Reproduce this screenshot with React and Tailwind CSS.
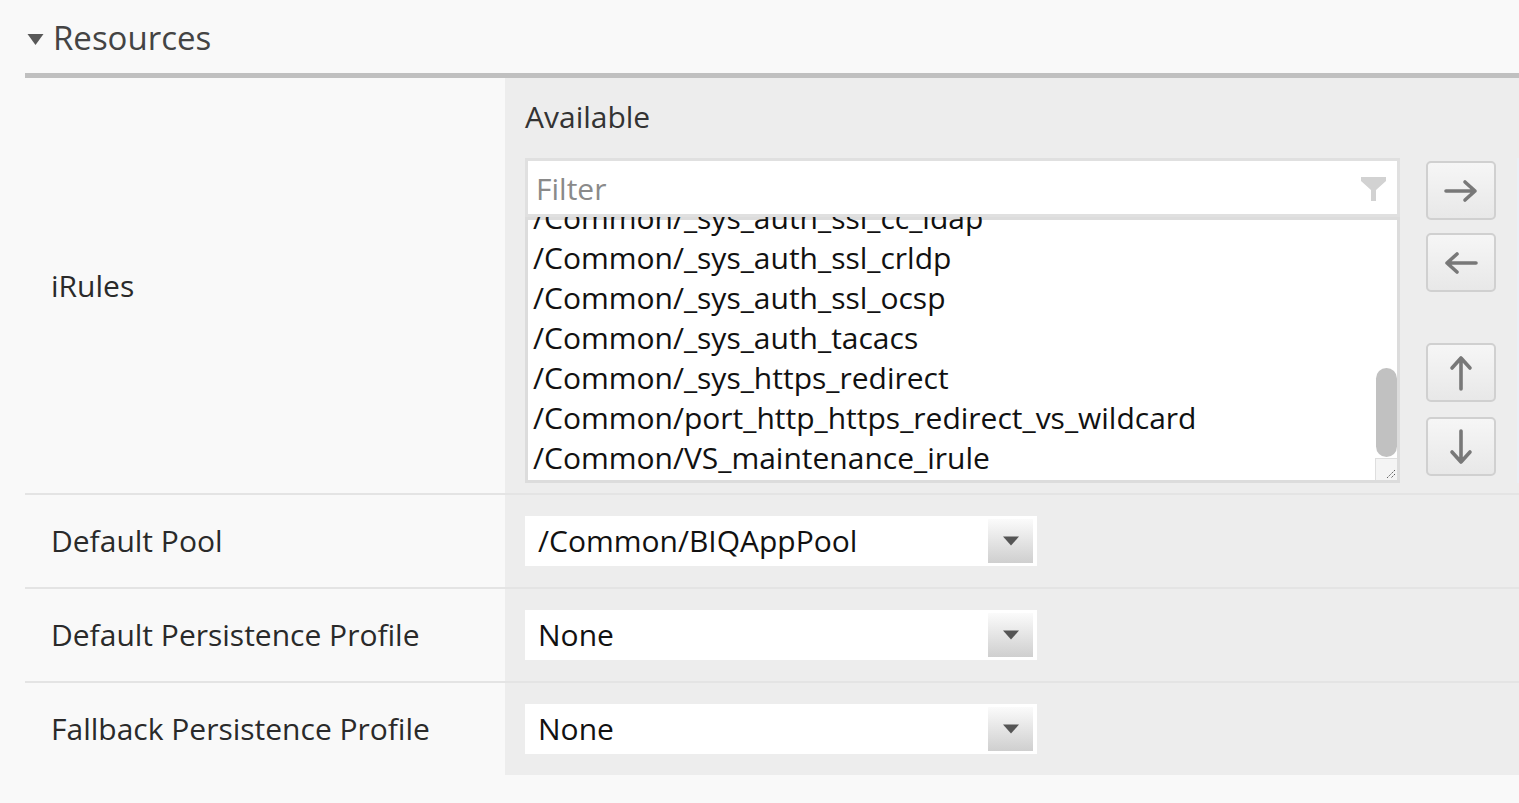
import React from "react";

const items = [
  "/Common/_sys_auth_ssl_cc_ldap",
  "/Common/_sys_auth_ssl_crldp",
  "/Common/_sys_auth_ssl_ocsp",
  "/Common/_sys_auth_tacacs",
  "/Common/_sys_https_redirect",
  "/Common/port_http_https_redirect_vs_wildcard",
  "/Common/VS_maintenance_irule",
];

function Arrow({ dir }) {
  const paths = {
    right: "M3 14 H32 M22 5 L32 14 L22 23",
    left: "M33 14 H4 M14 5 L4 14 L14 23",
  };
  const vpaths = {
    up: "M14 34 V3 M5 13 L14 3 L23 13",
    down: "M14 2 V33 M5 23 L14 33 L23 23",
  };
  if (dir === "left" || dir === "right") {
    return (
      <svg width="36" height="28" viewBox="0 0 36 28" fill="none">
        <path d={paths[dir]} stroke="#787878" strokeWidth="3.6" strokeLinecap="round" strokeLinejoin="round" />
      </svg>
    );
  }
  return (
    <svg width="28" height="36" viewBox="0 0 28 36" fill="none">
      <path d={vpaths[dir]} stroke="#787878" strokeWidth="3.6" strokeLinecap="round" strokeLinejoin="round" />
    </svg>
  );
}

function MoveButton({ dir, className }) {
  return (
    <div
      className={
        "flex h-[59px] w-[70px] items-center justify-center rounded-[5px] border-2 border-[#d0d0d0] bg-linear-to-b from-[#f6f6f6] to-[#e8e8e8] " +
        className
      }
    >
      <Arrow dir={dir} />
    </div>
  );
}

function Select({ value }) {
  return (
    <div className="flex h-[50px] w-[512px] items-center bg-white">
      <span className="pl-[13px] text-[30px] leading-[40px] text-[#111]">{value}</span>
      <div className="ml-auto mr-[4px] flex h-[44px] w-[45px] items-center justify-center bg-linear-to-b from-[#fbfbfb] to-[#cfcfcf]">
        <svg width="16" height="10" viewBox="0 0 16 10">
          <path d="M0 0.5 H16 L8 9.5 Z" fill="#555" />
        </svg>
      </div>
    </div>
  );
}

function Row({ label, children, last }) {
  return (
    <div className={"flex " + (last ? "h-[92px]" : "h-[94px] border-b-2 border-[#e4e4e4]")}>
      <div className="flex w-[480px] shrink-0 items-center pl-[26px] text-[30px] leading-[40px] text-[#2a2a2a]">
        {label}
      </div>
      <div className="flex flex-1 items-center bg-[#ededed] pl-[20px]">{children}</div>
    </div>
  );
}

export default function App() {
  return (
    <div className="min-h-screen w-full overflow-hidden bg-[#f9f9f9] font-['Open_Sans',sans-serif]">
      <div className="pl-[25px]">
        <div className="flex h-[73px] items-center pt-[2px]">
          <svg width="17" height="13" viewBox="0 0 17 13" className="ml-[2px] mt-[4px]">
            <path d="M0.5 1 H16.5 L8.5 12 Z" fill="#585858" />
          </svg>
          <span className="ml-[9px] text-[33px] leading-none text-[#444]">Resources</span>
        </div>
        <div className="h-[5px] bg-[#c0c0c0]" />

        {/* iRules row */}
        <div className="flex h-[417px] border-b-2 border-[#e4e4e4]">
          <div className="flex w-[480px] shrink-0 items-center pl-[26px] text-[30px] leading-[40px] text-[#2a2a2a]">
            iRules
          </div>
          <div className="flex-1 overflow-hidden bg-[#ededed] pl-[20px] pt-[19px]">
            <div className="text-[30px] leading-[40px] text-[#333]">Available</div>
            <div className="mt-[21px] flex items-start">
              <div className="w-[875px] shrink-0">
                <div className="flex h-[59px] items-center border-[3px] border-[#e0e0e0] bg-white pl-[8px] pr-[11px] pt-[3px]">
                  <span className="text-[30px] leading-[40px] text-[#8a8a8a]">Filter</span>
                  <svg width="25" height="25" viewBox="0 0 25 25" className="ml-auto">
                    <path d="M0 0 H25 V4 L15 13 V24 H10 V13 L0 4 Z" fill="#d2d2d2" />
                  </svg>
                </div>
                <div className="relative h-[266px] overflow-hidden border-[3px] border-t-0 border-[#dcdcdc] bg-white">
                  <div className="border-t-[3px] border-[#dcdcdc]" />
                  <div className="-mt-[22px] pl-[5px] text-[30px] leading-[40px] text-[#111]">
                    {items.map((it) => (
                      <div key={it} className="whitespace-nowrap">
                        {it}
                      </div>
                    ))}
                  </div>
                  <div className="absolute right-0 top-[151px] h-[89px] w-[21px] rounded-full bg-[#c1c1c1]" />
                  <div className="absolute bottom-0 right-0 h-[22px] w-[22px] border-l border-t border-[#dedede] bg-[#f4f4f4]">
                    <svg width="22" height="22" viewBox="0 0 22 22" className="absolute inset-0">
                      <path d="M19 11 L11 19 M19 15 L15 19" stroke="#555" strokeWidth="1" strokeDasharray="1.5 1" />
                    </svg>
                  </div>
                </div>
              </div>
              <div className="ml-[26px] flex w-[70px] shrink-0 flex-col">
                <MoveButton dir="right" className="mt-[3px]" />
                <MoveButton dir="left" className="mt-[13px]" />
                <MoveButton dir="up" className="mt-[51px]" />
                <MoveButton dir="down" className="mt-[15px]" />
              </div>
              <div className="ml-[21px] h-[325px] w-[120px] shrink-0 bg-[#eaf0f6]" />
            </div>
          </div>
        </div>

        <Row label="Default Pool">
          <Select value="/Common/BIQAppPool" />
        </Row>
        <Row label="Default Persistence Profile">
          <Select value="None" />
        </Row>
        <Row label="Fallback Persistence Profile" last>
          <Select value="None" />
        </Row>
      </div>
    </div>
  );
}
